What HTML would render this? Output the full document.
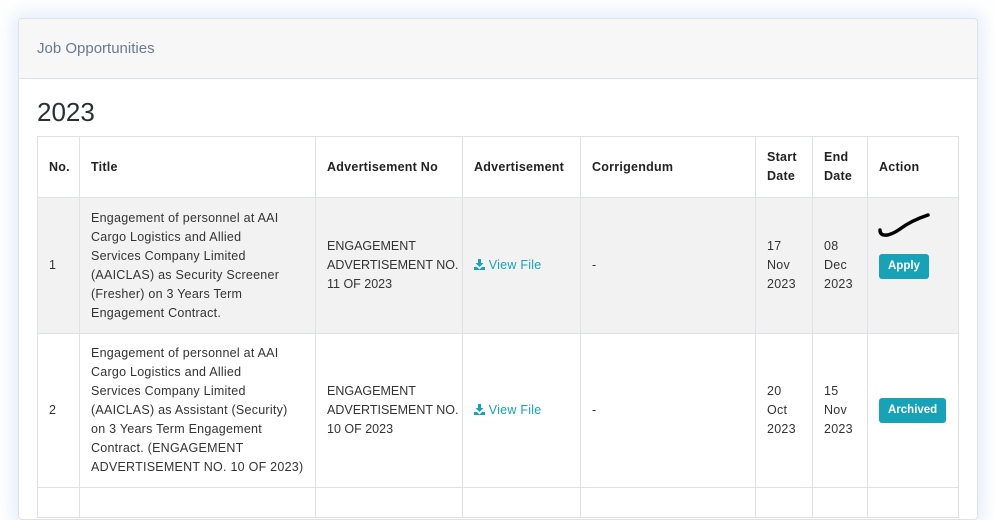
<!DOCTYPE html>
<html><head><style>
body{margin:0;background:#fff;font-family:"Liberation Sans",sans-serif;width:994px;height:491px;overflow:hidden;position:relative}
.card{position:absolute;left:18px;top:18px;width:958px;height:500px;border:1px solid #dfe3e8;border-radius:4px;background:#fff;box-shadow:0 0 18px 6px rgba(180,205,240,.35)}
.hd{height:59px;background:#f7f7f7;border-bottom:1px solid #dde2e8;color:#6b7a90;font-size:15px;line-height:60px;padding-left:18px;border-radius:4px 4px 0 0}
h2{position:absolute;left:18px;top:78px;margin:0;font-weight:normal;font-size:26px;color:#2a2f36}
table{position:absolute;left:18px;top:117px;border-collapse:collapse;table-layout:fixed;width:921px;font-size:12.5px;letter-spacing:0.25px;color:#333}
td,th{border:1px solid #dee2e6;padding:0 4px 0 11px;vertical-align:middle;text-align:left;line-height:19px;box-sizing:border-box;white-space:nowrap;overflow:hidden}
th{font-weight:bold;color:#222;height:61px}
tr.g td{background:#f2f2f2}
a{color:#17a2b8;text-decoration:none}
.n{letter-spacing:0}
.b{display:inline-block;background:#17a2b8;color:#fff;font-weight:bold;font-size:11.5px;letter-spacing:0;border-radius:3px;padding:4px 9px;line-height:17px}
</style></head><body>
<div class="card">
<div class="hd">Job Opportunities</div>
<h2>2023</h2>
<table>
<colgroup><col style="width:42px"><col style="width:236px"><col style="width:147px"><col style="width:118px"><col style="width:175px"><col style="width:57px"><col style="width:55px"><col style="width:91px"></colgroup>
<tr><th>No.</th><th>Title</th><th>Advertisement No</th><th>Advertisement</th><th>Corrigendum</th><th>Start<br>Date</th><th>End<br>Date</th><th>Action</th></tr>
<tr class="g" style="height:136px"><td>1</td><td>Engagement of personnel at AAI<br>Cargo Logistics and Allied<br>Services Company Limited<br>(AAICLAS) as Security Screener<br>(Fresher) on 3 Years Term<br>Engagement Contract.</td><td class="n">ENGAGEMENT<br>ADVERTISEMENT NO.<br>11 OF 2023</td><td><a><svg width="11" height="11" viewBox="0 0 11 11" style="vertical-align:-1px"><path d="M4 0h3v4h2.5L5.5 8 1.5 4H4z M0 8h3l2.5 2.5L8 8h3v3H0z" fill="#17a2b8"/></svg> View File</a></td><td>-</td><td>17<br>Nov<br>2023</td><td>08<br>Dec<br>2023</td><td style="position:relative"><svg style="position:absolute;left:8px;top:12px" width="54" height="30"><path d="M4 20 C4 28 14 26 24 19 C32 13 40 9 52 5" stroke="#000" stroke-width="3.5" fill="none" stroke-linecap="round"/></svg><span class="b" style="margin-top:2px">Apply</span></td></tr>
<tr style="height:154px"><td>2</td><td>Engagement of personnel at AAI<br>Cargo Logistics and Allied<br>Services Company Limited<br>(AAICLAS) as Assistant (Security)<br>on 3 Years Term Engagement<br>Contract. (ENGAGEMENT<br>ADVERTISEMENT NO. 10 OF 2023)</td><td class="n">ENGAGEMENT<br>ADVERTISEMENT NO.<br>10 OF 2023</td><td><a><svg width="11" height="11" viewBox="0 0 11 11" style="vertical-align:-1px"><path d="M4 0h3v4h2.5L5.5 8 1.5 4H4z M0 8h3l2.5 2.5L8 8h3v3H0z" fill="#17a2b8"/></svg> View File</a></td><td>-</td><td>20<br>Oct<br>2023</td><td>15<br>Nov<br>2023</td><td><span class="b">Archived</span></td></tr>
<tr style="height:30px"><td></td><td></td><td></td><td></td><td></td><td></td><td></td><td></td></tr>
</table>
</div>
</body></html>
